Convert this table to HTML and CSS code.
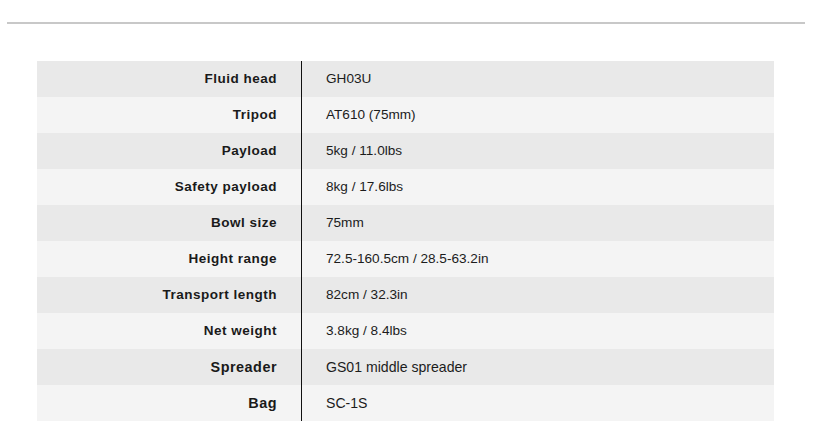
FILE: index.html
```html
<!DOCTYPE html>
<html>
<head>
<meta charset="utf-8">
<link rel="stylesheet" href="styles.css">
</head>
<body>
<div class="rule"></div>
<div class="specs">
  <div class="row"><div class="label">Fluid head</div><div class="value">GH03U</div></div>
  <div class="row"><div class="label">Tripod</div><div class="value">AT610 (75mm)</div></div>
  <div class="row"><div class="label">Payload</div><div class="value">5kg / 11.0lbs</div></div>
  <div class="row"><div class="label">Safety payload</div><div class="value">8kg / 17.6lbs</div></div>
  <div class="row"><div class="label">Bowl size</div><div class="value">75mm</div></div>
  <div class="row"><div class="label">Height range</div><div class="value">72.5-160.5cm / 28.5-63.2in</div></div>
  <div class="row"><div class="label">Transport length</div><div class="value">82cm / 32.3in</div></div>
  <div class="row"><div class="label">Net weight</div><div class="value">3.8kg / 8.4lbs</div></div>
  <div class="row"><div class="label big">Spreader</div><div class="value big">GS01 middle spreader</div></div>
  <div class="row"><div class="label big">Bag</div><div class="value big">SC-1S</div></div>
</div>
</body>
</html>
```
FILE: styles.css
```css
html, body {
  margin: 0;
  padding: 0;
  background: #ffffff;
}
body {
  font-family: "Liberation Sans", Arial, sans-serif;
  color: #1e1e1e;
}
.rule {
  margin: 22px 12px 0 7px;
  height: 2px;
  background: #c8c8c8;
}
.specs {
  margin: 37px 0 0 37px;
  width: 737px;
  display: flex;
  flex-direction: column;
}
.row {
  display: grid;
  grid-template-columns: 265px 1fr;
  height: 36px;
  background: #e9e9e9;
}
.row:nth-child(even) {
  background: #f4f4f4;
}
.label {
  text-align: right;
  padding-right: 24px;
  font-weight: bold;
  font-size: 13.5px;
  letter-spacing: 0.5px;
  line-height: 36px;
  border-right: 1px solid #111;
  color: #1a1a1a;
}
.value {
  padding-left: 24px;
  font-size: 13.6px;
  line-height: 36px;
  color: #1c1c1c;
}
.label.big {
  font-size: 14.4px;
}
.value.big {
  font-size: 14.1px;
}
```
